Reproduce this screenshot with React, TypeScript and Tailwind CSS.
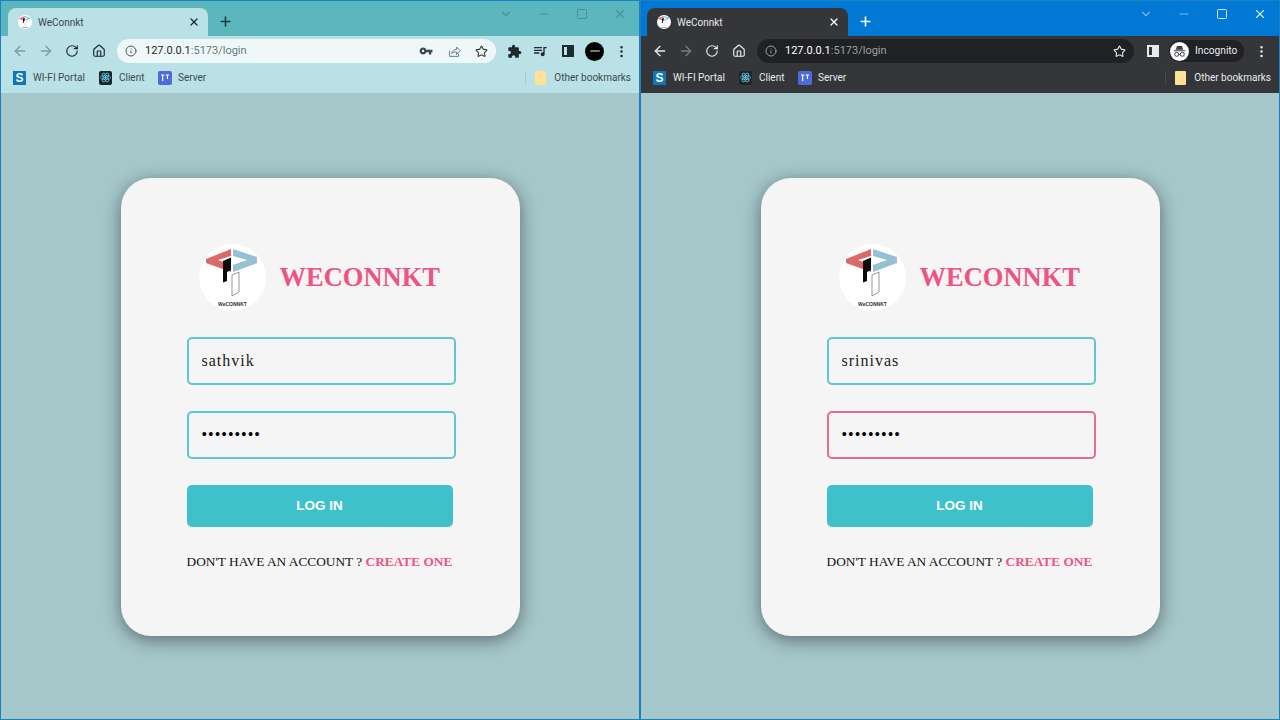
import { ArrowLeft, ArrowRight, ChevronDown, EllipsisVertical, House, Info, Minus, Plus, RotateCw, Square, Star, X } from 'lucide-react'
import { MdExtension, MdQueueMusic, MdVpnKey } from 'react-icons/md'

const Logo = ({ size }: { size: number }) => (
  <svg width={size} height={size} viewBox="0 0 67 67" className="shrink-0">
    <circle cx="33.5" cy="33.5" r="33.5" fill="#fff" />
    <path d="M7 15 32 5v7L19 16l13 5v7L7 19z" fill="#d9696b" />
    <path d="M34 5l24 8v6l-24 9v-7l14-5-14-4z" fill="#94c1d6" />
    <path d="M24 17l8-3.5V26l-4 2v9l-4 1.5z" fill="#0a0a0a" />
    <path d="M33 31l7-3v20l-7 4z" fill="#fff" stroke="#555" strokeWidth="0.6" />
    <text x="33.5" y="62" textAnchor="middle" fontSize="5" fontWeight="700" fontFamily="Liberation Sans, sans-serif" fill="#333">WeCONNKT</text>
  </svg>
)

const Bookmarks = ({ dark }: { dark: boolean }) => (
  <div className={`flex h-[27px] items-center pb-1 pl-3 pr-2 font-['Roboto',sans-serif] text-[10px] ${dark ? 'text-[#e8eaed]' : 'text-[#3c4a4d]'}`}>
    <span className="flex h-[14px] w-[13px] items-center justify-center bg-[#0f75bc] font-['Liberation_Sans',sans-serif] text-[12px] font-bold text-white">S</span>
    <span className="ml-[7px] w-[52px] whitespace-nowrap">WI-FI Portal</span>
    <span className="ml-[14px] flex h-[14px] w-[13px] items-center justify-center rounded-[2px] bg-[#20232a]">
      <svg width="11" height="11" viewBox="0 0 24 24" fill="none" stroke="#61dafb" strokeWidth="1.5">
        <ellipse cx="12" cy="12" rx="11" ry="4.4" />
        <ellipse cx="12" cy="12" rx="11" ry="4.4" transform="rotate(60 12 12)" />
        <ellipse cx="12" cy="12" rx="11" ry="4.4" transform="rotate(120 12 12)" />
        <circle cx="12" cy="12" r="2" fill="#61dafb" />
      </svg>
    </span>
    <span className="ml-[7px] w-[25px]">Client</span>
    <span className="ml-[14px] flex h-[14px] w-[14px] items-center justify-center rounded-[2px] bg-[#4f6bd8]">
      <svg width="10" height="10" viewBox="0 0 10 10" fill="none" stroke="#fff" strokeWidth="1.1">
        <path d="M1 2h3.4M2.7 2v6M5.8 2h3.2M7.4 2v4" />
      </svg>
    </span>
    <span className="ml-[6px] w-[28px]">Server</span>
    <div className={`ml-auto h-[14px] w-px ${dark ? 'bg-[#4a4b4f]' : 'bg-[#a3cdd2]'}`} />
    <span className="ml-[9px] h-[14px] w-[11px] rounded-[1px] bg-[#fde293]" />
    <span className="ml-2 whitespace-nowrap">Other bookmarks</span>
  </div>
)

const Toolbar = ({ dark }: { dark: boolean }) => {
  const icon = dark ? 'text-[#e8eaed]' : 'text-[#1f2a2c]'
  return (
    <div className="flex h-[30px] items-center pl-[11px] pr-[10px]">
      <ArrowLeft size={16} className={`mr-[10px] ${dark ? 'text-[#e8eaed]' : 'text-[#7f9ca0]'}`} />
      <ArrowRight size={16} className={`mr-[11px] ${dark ? 'text-[#7b7c7f]' : 'text-[#7f9ca0]'}`} />
      <RotateCw size={14} className={`mr-[13px] ${icon}`} />
      <House size={14} className={`mr-[11px] ${icon}`} />
      <div className={`flex h-[24px] items-center rounded-full pl-2 pr-2 ${dark ? 'w-[377px] bg-[#202124]' : 'w-[379px] bg-[#eef8f9]'}`}>
        <Info size={12} className={dark ? 'text-[#9aa0a6]' : 'text-[#4a5759]'} />
        <span className={`ml-2 font-['Roboto',sans-serif] text-[11px] ${dark ? 'text-[#9aa0a6]' : 'text-[#66787b]'}`}>
          <span className={dark ? 'text-white' : 'text-[#1f2a2c]'}>127.0.0.1</span>:5173/login
        </span>
        {!dark && <MdVpnKey size={14} className="ml-auto text-[#3d4a4c]" />}
        {!dark && (
          <svg width="13" height="13" viewBox="0 0 16 16" fill="none" stroke="#6a7a7d" strokeWidth="1.2" className="ml-[15px]">
            <path d="M2 7v7h11v-3" />
            <path d="M4.5 10.5c.7-3 3-5 6-5V2.5l4.5 4.5-4.5 4.5V8.5c-2.6 0-4.5.6-6 2z" />
          </svg>
        )}
        <Star size={13} className={`${dark ? 'ml-auto text-[#e8eaed]' : 'ml-[14px] text-[#2b3638]'}`} />
      </div>
      {!dark && <MdExtension size={15} className="ml-[11px] text-[#1f2a2c]" />}
      {!dark && <MdQueueMusic size={16} className="ml-[10px] text-[#1f2a2c]" />}
      <div className={`flex h-[12px] w-[12px] justify-end border-2 ${dark ? 'ml-[13px] border-[#e8eaed]' : 'ml-[14px] border-[#1f2a2c]'}`}>
        <div className={`h-full w-[5px] ${dark ? 'bg-[#e8eaed]' : 'bg-[#1f2a2c]'}`} />
      </div>
      {dark ? (
        <div className="ml-[10px] flex h-[22px] w-[75px] items-center rounded-full bg-[#202124]">
          <div className="ml-[1px] flex h-[19px] w-[19px] items-center justify-center rounded-full bg-white">
            <svg width="15" height="15" viewBox="0 0 24 24" fill="#3c4043">
              <path d="M8 3h8l2 6H6zM3 10h18v1.6H3z" />
              <circle cx="7.5" cy="16.5" r="3.2" fill="none" stroke="#3c4043" strokeWidth="1.6" />
              <circle cx="16.5" cy="16.5" r="3.2" fill="none" stroke="#3c4043" strokeWidth="1.6" />
              <path d="M10.5 16h3v1.2h-3z" />
            </svg>
          </div>
          <span className="ml-[6px] font-['Roboto',sans-serif] text-[10.2px] text-[#e8eaed]">Incognito</span>
        </div>
      ) : (
        <div className="ml-[11px] flex h-[19px] w-[19px] items-center justify-center rounded-full bg-black">
          <div className="h-[2px] w-[10px] rounded-full bg-[#777]" />
        </div>
      )}
      <EllipsisVertical size={15} className={`ml-auto ${icon}`} />
    </div>
  )
}

const Browser = ({ dark, user, passBorder }: { dark: boolean; user: string; passBorder: string }) => (
  <div className="flex h-[720px] flex-col border border-[#1a82c4] bg-[#a5c7ca]">
    <div className={`flex h-[35px] items-end ${dark ? 'bg-[#0078d4]' : 'bg-[#5bb6be]'}`}>
      <div className={`flex h-[28px] items-center rounded-t-[8px] pl-[10px] pr-[8px] ${dark ? 'ml-[6px] w-[201px] bg-[#35363a] text-white' : 'ml-[7px] w-[200px] bg-[#b9e1e6] text-[#1f2a2c]'}`}>
        <Logo size={14} />
        <span className={`ml-[6px] font-['Roboto',sans-serif] text-[10px] ${dark ? 'text-[#e8eaed]' : 'text-[#3c4a4d]'}`}>WeConnkt</span>
        <X size={12} strokeWidth={2.5} className="ml-auto" />
      </div>
      <Plus size={15} strokeWidth={2.5} className={`mb-[7px] ml-[10px] ${dark ? 'text-white' : 'text-[#1f3a3e]'}`} />
      <div className={`mb-[15px] ml-auto flex items-center gap-[24px] pr-[12px] ${dark ? 'text-[#d5e8f7]' : 'text-[#4a9098]'}`}>
        <ChevronDown size={14} className={dark ? 'text-[#7db8e8]' : ''} />
        <Minus size={14} className={dark ? 'text-[#7db8e8]' : ''} />
        <Square size={12} className="mx-[1px]" />
        <X size={14} />
      </div>
    </div>
    <div className={dark ? 'bg-[#35363a]' : 'bg-[#b9e1e6]'}>
      <Toolbar dark={dark} />
      <Bookmarks dark={dark} />
    </div>
    <div className="flex flex-1 justify-center pt-[85px]">
      <div className="flex h-[458px] w-[399px] flex-col rounded-[30px] bg-[#f5f5f5] px-[66px] pt-[66px] shadow-[0_4px_18px_rgba(0,0,0,0.45)]">
        <div className="flex items-center gap-[14px] pl-[12px]">
          <Logo size={67} />
          <span className="font-['Liberation_Serif',serif] text-[26.5px] font-bold text-[#ef5380]">WECONNKT</span>
        </div>
        <input readOnly value={user} className="mt-[26px] h-[48px] w-[269px] shrink-0 rounded-[5px] border-2 border-[#62c5cf] bg-transparent pl-[13px] pr-[13px] font-['Liberation_Serif',serif] text-[16px] tracking-[1px] text-[#1a1a1a] outline-none" />
        <input readOnly type="password" value="password1" className={`mt-[26px] h-[48px] w-[269px] shrink-0 rounded-[5px] border-2 ${passBorder} bg-transparent pl-[13px] pr-[13px] font-['Liberation_Serif',serif] text-[16px] tracking-[1px] text-black outline-none`} />
        <button className="mt-[26px] h-[42px] w-[266px] shrink-0 rounded-[5px] bg-[#3fc1cb] pt-px font-['Liberation_Sans',sans-serif] text-[13.5px] font-bold text-white">LOG IN</button>
        <div className="mt-[27px] whitespace-nowrap font-['Liberation_Serif',serif] text-[13.33px] leading-4 text-[#111]">
          DON'T HAVE AN ACCOUNT ? <span className="font-bold text-[#ef5380]">CREATE ONE</span>
        </div>
      </div>
    </div>
  </div>
)

export default function App() {
  return (
    <div className="grid h-[720px] w-[1280px] grid-cols-2 overflow-hidden">
      <Browser dark={false} user="sathvik" passBorder="border-[#62c5cf]" />
      <Browser dark user="srinivas" passBorder="border-[#ea6a95]" />
    </div>
  )
}
